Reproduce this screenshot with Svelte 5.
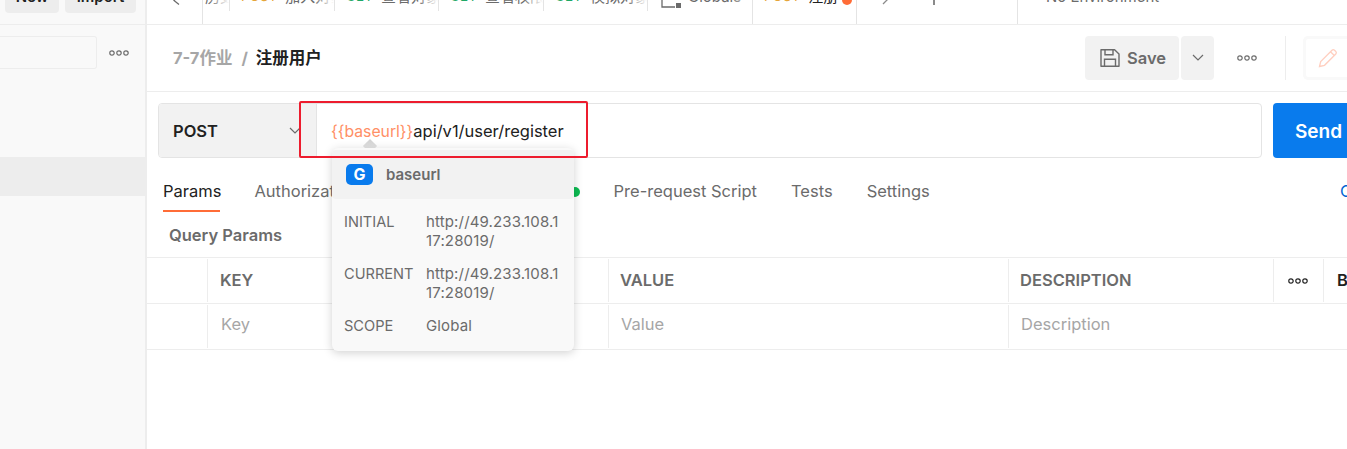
<script>
  const tabs = [
    { w: 105, method: 'POST', cls: 'post', name: '加入对象' },
    { w: 104, method: 'GET', cls: 'get', name: '查看对象' },
    { w: 105, method: 'GET', cls: 'get', name: '查看权限' },
    { w: 104, method: 'GET', cls: 'get', name: '模拟对象' }
  ];
  const rows = [
    { k: 'INITIAL', v: 'http://49.233.108.117:28019/' },
    { k: 'CURRENT', v: 'http://49.233.108.117:28019/' },
    { k: 'SCOPE', v: 'Global' }
  ];
  const tabNames = ['Params', 'Authorization', 'Headers (8)', 'Body', 'Pre-request Script', 'Tests', 'Settings'];
</script>

<div class="app">
  <aside class="side">
    <div class="side-top">
      <button class="sbtn new">New</button>
      <button class="sbtn imp">Import</button>
    </div>
    <div class="side-search">
      <div class="search"></div>
      <svg class="dots" width="20" height="6" viewBox="0 0 20 6"><circle cx="3" cy="3" r="2.2"/><circle cx="10" cy="3" r="2.2"/><circle cx="17" cy="3" r="2.2"/></svg>
    </div>
    <div class="side-row"></div>
  </aside>

  <main class="main">
    <div class="tabbar">
      <div class="tab-nav"><svg width="10" height="8" viewBox="0 0 10 8"><path d="M6-5 1 .5l5 4" fill="none" stroke="#6b6b6b" stroke-width="1.3"/></svg></div>
      <div class="tab first"><span class="tname">历史</span></div>
      {#each tabs as t}
        <div class="tab" style="width:{t.w}px"><span class="m {t.cls}">{t.method}</span><span class="tname">{t.name}</span></div>
      {/each}
      <div class="tab global"><svg width="20" height="8" viewBox="0 0 20 8"><path d="M1 0v7h13" fill="none" stroke="#6b6b6b" stroke-width="1.3"/><rect x="15" y="3" width="5" height="5" fill="#6b6b6b"/></svg><span class="tname">Globals</span></div>
      <div class="tab active"><span class="m post">POST</span><span class="tname dark">注册</span><i class="dot"></i></div>
      <div class="tab-right">
        <svg class="chev" width="8" height="6" viewBox="0 0 8 6"><path d="M0-5l5 5-4 4" fill="none" stroke="#8a8a8a" stroke-width="1.3"/></svg>
        <i class="plus"></i>
      </div>
      <div class="env">No Environment</div>
    </div>

    <div class="head">
      <div class="crumb"><span class="c1">7-7作业</span><span class="sl">/</span><span class="c2">注册用户</span></div>
      <div class="actions">
        <button class="save">
          <svg width="20" height="20" viewBox="0 0 20 20" fill="none" stroke="#6b6b6b" stroke-width="1.4"><path d="M1 1.7h13.6L19 6v12.3H1z" stroke-linejoin="round"/><path d="M5 1.7v5h8v-5M4.500 18.300v-7h11v7"/></svg>
          Save
        </button>
        <button class="caret"><svg width="12" height="8" viewBox="0 0 12 8"><path d="M1 1l5 5 5-5" fill="none" stroke="#6b6b6b" stroke-width="1.2"/></svg></button>
        <svg class="dots d2" width="20" height="6" viewBox="0 0 20 6"><circle cx="3" cy="3" r="2.2"/><circle cx="10" cy="3" r="2.2"/><circle cx="17" cy="3" r="2.2"/></svg>
        <div class="vsep"></div>
        <div class="pencil"><div><svg width="20" height="20" viewBox="0 0 20 20"><path d="M1.500 18.500l1.200-5L14 2.200a1.800 1.800 0 0 1 2.500 0l1.300 1.300a1.800 1.800 0 0 1 0 2.500L6.500 17.300zM12.500 3.700l3.800 3.800" fill="none" stroke="#ffcfc0" stroke-width="1.300"/></svg></div></div>
      </div>
    </div>

    <div class="urlrow">
      <div class="urlbox">
        <div class="method"><span>POST</span><svg width="12" height="8" viewBox="0 0 12 8"><path d="M1 1l5 5 5-5" fill="none" stroke="#6b6b6b" stroke-width="1.2"/></svg></div>
        <div class="url"><span class="var">&#123;&#123;baseurl&#125;&#125;</span>api/v1/user/register</div>
      </div>
      <button class="send">Send</button>
    </div>

    <nav class="reqtabs">
      {#each tabNames as n, i}
        <span class="rt" class:on={i === 0}>{n}{#if n === 'Body'}<i class="gdot"></i>{/if}</span>
      {/each}
      <span class="cookies">Cookies</span>
    </nav>

    <div class="qp">Query Params</div>

    <div class="table">
      <div class="cell c0 hd"></div>
      <div class="cell hd key">KEY</div>
      <div class="cell hd">VALUE</div>
      <div class="cell hd">DESCRIPTION</div>
      <div class="cell hd tc"><svg class="dots d3" width="20" height="6" viewBox="0 0 20 6"><circle cx="3" cy="3" r="2.200"/><circle cx="10" cy="3" r="2.200"/><circle cx="17" cy="3" r="2.200"/></svg></div>
      <div class="cell hd bulk">Bulk Edit</div>
      <div class="cell c0"></div>
      <div class="cell ph key">Key</div>
      <div class="cell ph">Value</div>
      <div class="cell ph">Description</div>
      <div class="cell plain"></div>
      <div class="cell plain"></div>
    </div>
  </main>

  <div class="arrow"></div>
  <div class="pop">
    <div class="pop-head"><span class="badge">G</span><span class="pname">baseurl</span></div>
    <dl>
      {#each rows as r}
        <dt>{r.k}</dt><dd>{r.v}</dd>
      {/each}
    </dl>
  </div>
  <div class="redbox"></div>
</div>

<style>
  :global(body) { margin: 0; background: #fff; }
  .app { position: relative; display: flex; width: 1347px; height: 449px; overflow: hidden; font-family: Inter, "Noto Sans CJK SC", sans-serif; color: #6b6b6b; }
  button { font-family: inherit; border: 0; margin: 0; padding: 0; }
  .side { width: 145px; flex: none; background: #f9f9f9; border-right: 2px solid #ededed; }
  .side-top { height: 24px; border-bottom: 1px solid #ededed; display: flex; gap: 6px; padding-left: 5px; overflow: hidden; }
  .sbtn { height: 33px; margin-top: -20px; background: #ededed; border-radius: 4px; font-size: 15px; font-weight: 600; color: #212121; }
  .new { width: 54px; }
  .imp { width: 71px; }
  .side-search { display: flex; align-items: center; height: 33px; margin-top: 11px; }
  .search { width: 96px; height: 31px; border: 1px solid #ededed; border-left: 0; border-radius: 0 3px 3px 0; }
  .dots { fill: none; stroke: #6b6b6b; stroke-width: 1.2; }
  .side-search .dots { margin-left: 12px; }
  .side-row { height: 39px; margin-top: 88px; background: #ededed; }

  .main { flex: 1; min-width: 0; }
  .tabbar { position: relative; display: flex; height: 24px; border-bottom: 1px solid #ededed; overflow: hidden; }
  .tab-nav { width: 56px; flex: none; border-right: 1px solid #e4e4e4; padding-left: 26px; box-sizing: border-box; }
  .tab-nav svg { display: block; }
  .tab { position: relative; flex: none; box-sizing: border-box; height: 11px; padding-left: 11px; display: flex; align-items: flex-end; gap: 8px; border-right: 1px solid #e4e4e4; font-size: 15px; line-height: 15px; overflow: hidden; white-space: nowrap; }
  .first { width: 27px; padding-left: 2px; }
  .global { width: 105px; padding-left: 13px; gap: 7px; }
  .global svg { align-self: flex-start; flex: none; }
  .tab .tname, .tab .m { position: relative; top: -7px; }
  .tab::after { content: ""; position: absolute; right: 0; top: 0; bottom: 0; width: 20px; background: linear-gradient(90deg, rgba(255,255,255,0), #fff); }
  .active::after { display: none; }
  .m { font-size: 13.5px; }
  .post { color: #e5a53a; }
  .get { color: #1fa866; }
  .tname { color: #6b6b6b; }
  .dark { color: #212121; }
  .active { width: 105px; height: 25px; background: #fff; border-left: 1px solid #e4e4e4; border-right: 1px solid #e4e4e4; align-items: flex-start; margin-left: -1px; }
  .active .m, .active .tname { top: -11px; }
  .dot { width: 10px; height: 10px; border-radius: 50%; background: #ff6c37; margin: -5px 0 0 -4px; flex: none; }
  .tab-right { width: 161px; flex: none; border-right: 1px solid #e4e4e4; position: relative; box-sizing: border-box; }
  .chev { position: absolute; left: 25px; top: 0; }
  .plus { position: absolute; left: 76px; top: 0; width: 2px; height: 5px; background: #8a8a8a; }
  .env { padding-left: 28px; font-size: 15px; line-height: 15px; margin-top: -11px; white-space: nowrap; }

  .head { display: flex; height: 66px; align-items: center; border-bottom: 1px solid #ededed; padding-left: 26px; }
  .crumb { display: flex; gap: 9px; font-size: 16.5px; line-height: 24px; font-weight: 700; }
  .c1, .sl { color: #a6a6a6; }
  .c2 { color: #212121; margin-left: -1px; }
  .actions { margin-left: auto; display: flex; align-items: center; height: 44px; }
  .save { display: flex; align-items: center; gap: 7px; width: 94px; height: 44px; padding-left: 15px; box-sizing: border-box; background: #f2f2f2; border-radius: 4px; font-size: 16.5px; font-weight: 600; color: #6b6b6b; }
  .caret { width: 33px; height: 44px; margin-left: 2px; background: #f2f2f2; border-radius: 4px; display: flex; align-items: center; justify-content: center; }
  .d2 { margin-left: 23px; }
  .vsep { width: 1px; height: 44px; background: #ededed; margin-left: 28px; }
  .pencil { width: 44px; height: 44px; box-sizing: border-box; margin-left: 17px; border: 3px solid #f9f9f9; border-right: 0; border-radius: 5px 0 0 5px; display: flex; align-items: center; flex: none; }
  .pencil div { padding-left: 12px; display: flex; }

  .urlrow { display: flex; height: 55px; padding: 11px 0 0 11px; }
  .urlbox { display: flex; width: 1104px; height: 55px; box-sizing: border-box; border: 1px solid #e4e4e4; border-radius: 4px; overflow: hidden; flex: none; }
  .method { width: 158px; flex: none; box-sizing: border-box; background: #f2f2f2; display: flex; align-items: center; justify-content: space-between; padding: 0 15px 0 14px; font-size: 16.5px; font-weight: 600; color: #212121; border-right: 1px solid #e4e4e4; }
  .url { padding-left: 14px; line-height: 54px; font-size: 16.5px; color: #212121; white-space: nowrap; }
  .var { color: #ff8f66; font-size: 15.75px; }
  .send { width: 90px; height: 55px; margin-left: 11px; padding: 2px 0 0 22px; text-align: left; flex: none; background: #097bed; border-radius: 4px 0 0 4px; color: #fff; font-size: 19px; font-weight: 600; white-space: nowrap; }

  .reqtabs { position: relative; height: 44px; padding: 23px 0 0 16px; display: flex; gap: 34px; white-space: nowrap; font-size: 16.5px; line-height: 20px; }
  .rt { position: relative; color: #6b6b6b; height: 32px; }
  .rt.on { color: #212121; margin-right: -1px; }
  .rt.on::after { content: ""; position: absolute; left: 0; right: 1px; top: 29px; height: 2px; background: #ff6c37; }
  .gdot { display: inline-block; width: 10px; height: 10px; border-radius: 50%; background: #0cbb52; margin-left: 10px; vertical-align: 0; }
  .cookies { position: absolute; left: 1193px; top: 23px; color: #0265d2; }

  .qp { padding-left: 22px; font-size: 16.5px; font-weight: 600; line-height: 20px; height: 32px; }

  .table { display: grid; grid-template-columns: 60px 401px 400px 265px 50px 1fr; grid-auto-rows: 46px; border-top: 1px solid #ededed; }
  .cell { box-sizing: border-box; border-bottom: 1px solid #ededed; padding-left: 12px; display: flex; align-items: center; font-size: 16.5px; white-space: nowrap; overflow: hidden; position: relative; }
  .cell:not(.c0)::before { content: ""; position: absolute; left: 0; top: 1px; bottom: 1px; width: 1px; background: #ededed; }
  .hd { font-weight: 600; padding-bottom: 2px; }
  .c0 { padding: 0; }
  .tc { padding: 0; justify-content: center; }
  .d3 { stroke: #212121; }
  .bulk { color: #212121; padding-left: 14px; }
  .ph { color: #a6a6a6; font-weight: 400; padding: 0 0 5px 13px; }
  .hd.key { padding-left: 13px; }
  .ph.key { padding-left: 14px; }
  .plain::before { display: none; }

  .arrow { position: absolute; left: 365px; top: 141px; width: 10px; height: 10px; background: linear-gradient(135deg, #cfcfcf, #f2f2f2); transform: rotate(45deg); }
  .pop { position: absolute; left: 332px; top: 148px; width: 242px; height: 203px; box-sizing: border-box; padding-top: 2px; background: #f9f9f9; border-radius: 6px; box-shadow: 0 2px 10px rgba(0,0,0,.18); }
  .pop-head { display: flex; align-items: center; height: 49px; background: #f2f2f2; border-radius: 4px; padding-left: 14px; gap: 13px; }
  .badge { width: 27px; height: 21px; border-radius: 5px; background: #097bed; color: #fff; font-weight: 700; font-size: 16px; text-align: center; line-height: 21px; }
  .pname { font-size: 15px; font-weight: 600; color: #6b6b6b; }
  dl { display: grid; grid-template-columns: 82px 134px; align-items: baseline; margin: 13px 0 0 12px; row-gap: 14px; font-size: 15px; line-height: 19px; }
  dt, dd { margin: 0; color: #6b6b6b; }
  dt { font-size: 14.6px; }
  dd { word-break: break-all; letter-spacing: .15px; }

  .redbox { position: absolute; left: 299px; top: 101px; width: 289px; height: 57px; box-sizing: border-box; border: 2px solid #ed1c2e; border-radius: 2px; }
</style>
